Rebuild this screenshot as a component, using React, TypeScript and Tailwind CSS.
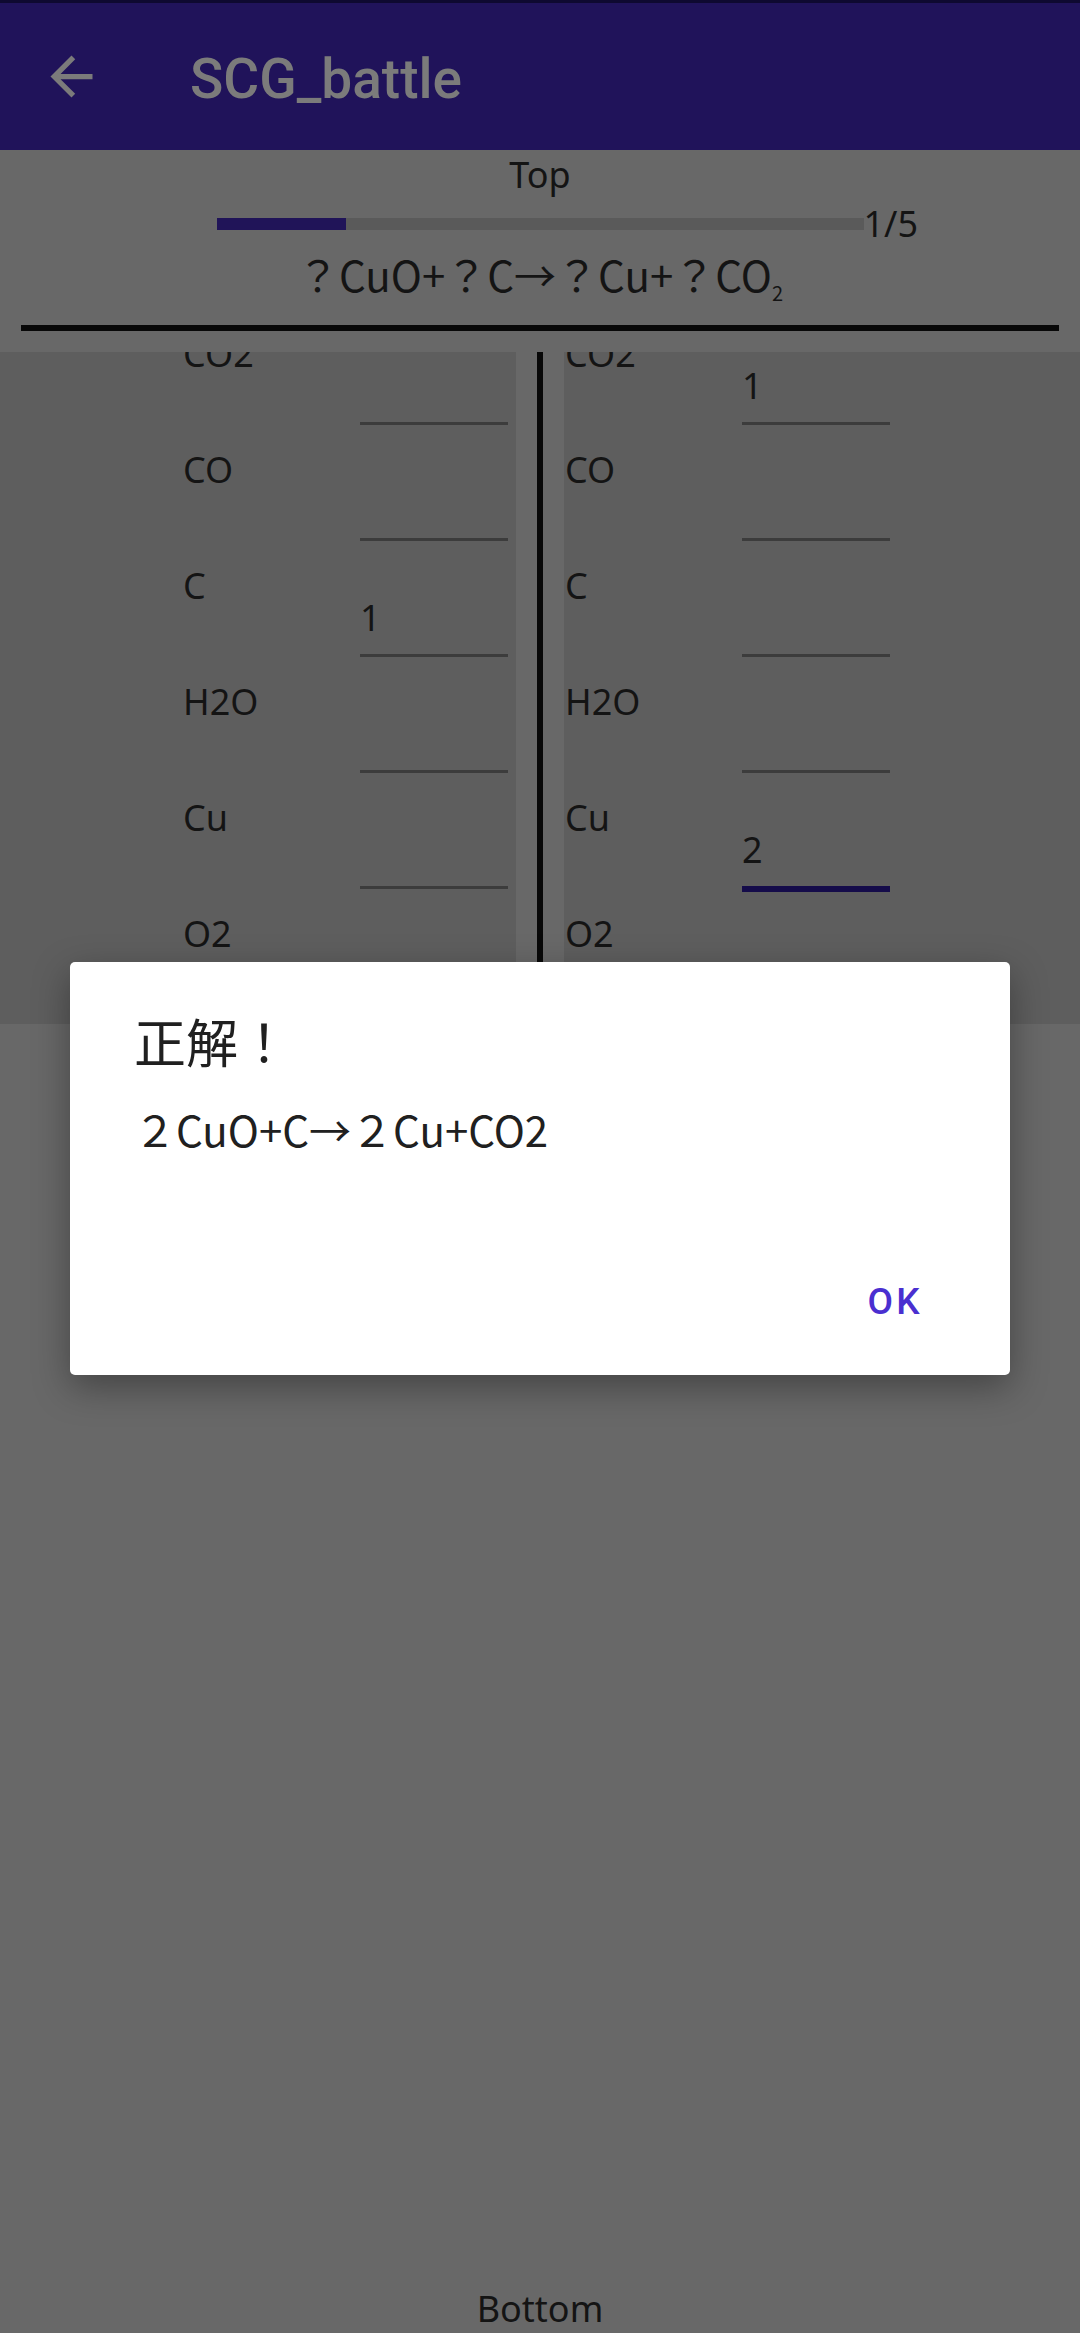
import React from 'react';

type Row = { label: string; value?: string; focused?: boolean };

const leftRows: Row[] = [
  { label: 'CO2' },
  { label: 'CO' },
  { label: 'C', value: '1' },
  { label: 'H2O' },
  { label: 'Cu' },
  { label: 'O2' },
];

const rightRows: Row[] = [
  { label: 'CO2', value: '1' },
  { label: 'CO' },
  { label: 'C' },
  { label: 'H2O' },
  { label: 'Cu', value: '2', focused: true },
  { label: 'O2' },
];

const BackArrow = () => (
  <svg viewBox="0 0 24 24" className="w-[63px] h-[63px]" fill="#7b7b7b">
    <path d="M20 11H7.83l5.59-5.59L12 4l-8 8 8 8 1.41-1.41L7.83 13H20v-2z" />
  </svg>
);

const SpeciesRow: React.FC<{ row: Row }> = ({ row }) => (
  <div className="h-[116px] flex items-start">
    <div className="w-[177px] pt-[7px] text-[36px] leading-[49px] text-[#141414]">
      {row.label}
    </div>
    <div className="w-[148px] h-[116px] flex flex-col">
      <div className="h-[39px]" />
      <div className="h-[61px] text-[36px] leading-[49px] text-[#141414]">
        {row.value ?? ''}
      </div>
      {row.focused ? (
        <div className="h-[6px] bg-[#150c4a]" />
      ) : (
        <div className="h-[3px] bg-[#3c3c3c]" />
      )}
    </div>
  </div>
);

export default function App() {
  return (
    <div className="relative w-[1080px] h-[2333px] bg-[#686868] flex flex-col overflow-hidden font-['Noto_Sans','Noto_Sans_CJK_JP',sans-serif]">
      {/* status bar edge */}
      <div className="h-[3px] bg-[#0e0930]" />

      {/* app bar */}
      <div className="h-[147px] bg-[#20135a] flex items-center">
        <div className="ml-[40px]">
          <BackArrow />
        </div>
        <span className="ml-[87px] mt-[5px] text-[55px] font-medium text-[#7b7b7b] font-['Roboto',sans-serif]">
          SCG_battle
        </span>
      </div>

      {/* header */}
      <div className="text-center text-[36px] leading-[49px] text-[#141414]">Top</div>
      <div className="grid grid-cols-[1fr_647px_1fr] items-center h-[49px]">
        <div />
        <div className="h-[12px] bg-[#5a5a5a]">
          <div className="h-full w-[20%] bg-[#201458]" />
        </div>
        <div className="text-[36px] leading-[49px] text-[#141414]">1/5</div>
      </div>
      <div className="h-[52px] text-center text-[42px] leading-[52px] text-[#141414] font-['Noto_Sans_CJK_JP',sans-serif]">
        ？CuO+？C→？Cu+？CO
        <span className="text-[20px] leading-none relative top-[9px]">2</span>
      </div>
      <div className="mt-[25px] mx-[21px] h-[6px] bg-[#080808]" />

      {/* answer lists */}
      <div className="mt-[21px] h-[672px] flex">
        <div className="w-[516px] bg-[#5e5e5e] overflow-hidden pl-[183px]">
          <div className="-mt-[30px]">
            {leftRows.map((r) => (
              <SpeciesRow key={r.label} row={r} />
            ))}
          </div>
        </div>
        <div className="w-[21px]" />
        <div className="w-[6px] bg-[#080808]" />
        <div className="w-[21px]" />
        <div className="flex-1 bg-[#5e5e5e] overflow-hidden pl-[1px]">
          <div className="-mt-[30px]">
            {rightRows.map((r) => (
              <SpeciesRow key={r.label} row={r} />
            ))}
          </div>
        </div>
      </div>

      <div className="mt-auto text-center text-[36px] leading-[49px] text-[#141414]">Bottom</div>

      {/* result dialog */}
      <div className="absolute left-[70px] top-[962px] w-[940px] h-[413px] bg-white rounded-[5px] shadow-[0_12px_36px_rgba(0,0,0,0.35)] flex flex-col px-[64px] font-['Noto_Sans_CJK_JP',sans-serif]">
        <div className="pt-[47px] text-[52px] leading-[64px] text-[#202020]">正解！</div>
        <div className="mt-[28px] text-[42px] leading-[56px] text-[#202020]">２CuO+C→２Cu+CO2</div>
        <div className="mt-auto pb-[51px] flex justify-end pr-[23px]">
          <span className="text-[37px] leading-[44px] font-medium tracking-[3.3px] text-[#4a2fd0] font-['Roboto',sans-serif]">
            OK
          </span>
        </div>
      </div>
    </div>
  );
}
